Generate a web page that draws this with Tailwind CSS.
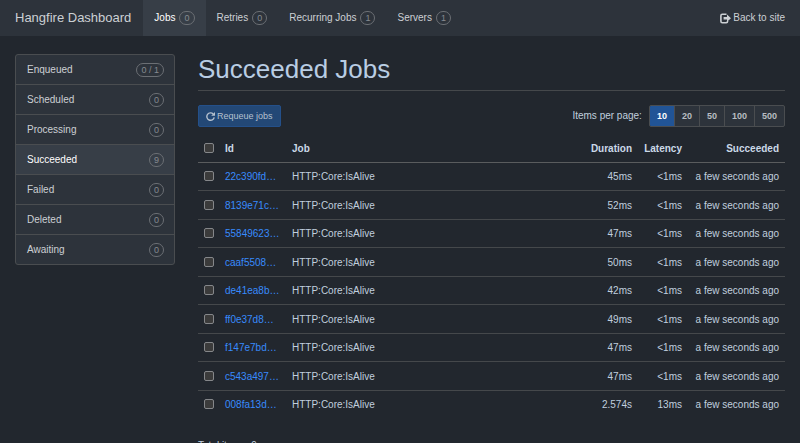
<!DOCTYPE html>
<html lang="en">
<head>
    <meta charset="UTF-8">
    <meta name="viewport" content="width=device-width, initial-scale=1.0">
    <title>Succeeded Jobs – Hangfire Dashboard</title>
    <script src="https://cdn.jsdelivr.net/npm/@tailwindcss/browser@4"></script>
</head>
<body class="min-h-screen bg-[#22272e] font-['Liberation_Sans',Arial,sans-serif] text-[10px] leading-4 text-[#c0cfdf]">
    <!-- Navbar -->
    <nav class="flex h-9 items-stretch bg-[#2d333b] px-[15px] text-[#ccd0d4]">
        <a href="#" class="mr-3 flex items-center text-[13px]">Hangfire Dashboard</a>
        <a href="#" class="flex items-center gap-1 bg-[#373e47] px-[11px] text-white">Jobs
            <span class="rounded-full border border-[#6b6f74] px-1 text-[9px] leading-3 text-[#858a90]">0</span>
        </a>
        <a href="#" class="flex items-center gap-1 px-[11px]">Retries
            <span class="rounded-full border border-[#6b6f74] px-1 text-[9px] leading-3 text-[#858a90]">0</span>
        </a>
        <a href="#" class="flex items-center gap-1 px-[11px]">Recurring Jobs
            <span class="rounded-full border border-[#6b6f74] px-1 text-[9px] leading-3 text-[#858a90]">1</span>
        </a>
        <a href="#" class="flex items-center gap-1 px-[11px]">Servers
            <span class="rounded-full border border-[#6b6f74] px-1 text-[9px] leading-3 text-[#858a90]">1</span>
        </a>
        <a href="#" class="ml-auto flex items-center gap-[2px]">
            <svg class="h-[11px] w-[11px]" viewBox="0 0 11 11" fill="none" stroke="currentColor" stroke-width="1.6">
                <path d="M6.500 1.300H2.300Q0.900 1.300 0.900 2.700V8.300Q0.900 9.700 2.300 9.700H6.200Q7.600 9.700 7.600 8.300V8"/>
                <path d="M7 1.500L11 5.200L7 8.800V6.500H3.600V4H7Z" fill="currentColor" stroke="none"/>
            </svg>
            Back to site
        </a>
    </nav>

    <div class="flex px-[15px] pt-[18px]">
        <!-- Sidebar -->
        <aside class="mr-[23px] w-40 shrink-0 self-start">
            <div id="stats" class="divide-y divide-[#4a4d50] overflow-hidden rounded-[3px] border border-[#4a4d50] bg-[#2d333b] text-[#ccd0d4]"></div>
        </aside>

        <main class="min-w-0 flex-1">
            <h1 class="border-b border-[#45484b] pb-1.5 text-[26px] leading-[30px] text-[#b9cde3]">Succeeded Jobs</h1>

            <div class="mt-3.5 flex items-center">
                <button class="flex h-[22px] items-center gap-[2px] rounded-[2px] border border-[#24508a] bg-[#234876] px-[7px] text-[9px] text-[#b4c0ce]" disabled>
                    <svg class="h-[9px] w-[9px]" viewBox="0 0 9 9" fill="none" stroke="currentColor" stroke-width="1.400">
                        <path d="M7.300 2.100A3.700 3.700 0 1 0 8.200 5.300"/>
                        <path d="M9 0V3.800H5.200Z" fill="currentColor" stroke="none"/>
                    </svg>
                    Requeue jobs
                </button>
                <span class="ml-auto mr-[7px]">Items per page:</span>
                <div class="flex divide-x divide-[#4a4d50] overflow-hidden rounded-[2px] border border-[#4a4d50] bg-[#2d333b] text-[9px] leading-5 font-bold text-[#b8bdc2]">
                    <a href="#" class="bg-[#215496] px-[7px] text-white">10</a>
                    <a href="#" class="px-[7px]">20</a>
                    <a href="#" class="px-[7px]">50</a>
                    <a href="#" class="px-[7px]">100</a>
                    <a href="#" class="px-[7px]">500</a>
                </div>
            </div>

            <table class="mt-[7px] w-full border-collapse [&_td+td]:pt-0.5 [&_th+th]:pt-0.5">
                <thead>
                    <tr class="h-7 border-b border-[#5a5c5e] text-left text-[#cbd9e8]">
                        <th class="w-[27px] pl-[6px]"><input type="checkbox" aria-label="Select all jobs" class="block h-[10px] w-[10px] appearance-none rounded-[2px] border border-[#85878a] bg-[#3b3b3b]"></th>
                        <th class="w-[67px]">Id</th>
                        <th>Job</th>
                        <th class="text-right">Duration</th>
                        <th class="w-[50px] text-right">Latency</th>
                        <th class="w-[103px] pr-[6px] text-right">Succeeded</th>
                    </tr>
                </thead>
                <tbody id="jobs"></tbody>
            </table>

            <p class="mt-5">Total items: 9</p>
        </main>
    </div>

    <script>
        const stats = [
            ['Enqueued', '0 / 1'],
            ['Scheduled', '0'],
            ['Processing', '0'],
            ['Succeeded', '9'],
            ['Failed', '0'],
            ['Deleted', '0'],
            ['Awaiting', '0']
        ];

        const jobs = [
            ['22c390fd…', '45ms', '<1ms'],
            ['8139e71c…', '52ms', '<1ms'],
            ['55849623…', '47ms', '<1ms'],
            ['caaf5508…', '50ms', '<1ms'],
            ['de41ea8b…', '42ms', '<1ms'],
            ['ff0e37d8…', '49ms', '<1ms'],
            ['f147e7bd…', '47ms', '<1ms'],
            ['c543a497…', '47ms', '<1ms'],
            ['008fa13d…', '2.574s', '13ms']
        ];

        document.getElementById('stats').innerHTML = stats.map(([name, count]) => `
            <a href="#" class="flex items-center justify-between py-[6px] pr-[10px] pl-[11px] leading-[17px] ${name === 'Succeeded' ? 'bg-[#373e47] text-white' : ''}">
                ${name}
                <span class="rounded-full border border-[#6b6f74] px-1 text-[9px] leading-3 text-[#858a90]">${count}</span>
            </a>
        `).join('');

        document.getElementById('jobs').innerHTML = jobs.map(([id, duration, latency]) => `
            <tr class="border-b border-[#45484b] odd:h-7 even:h-[29px] last:border-b-0">
                <td class="pl-[6px]"><input type="checkbox" aria-label="Select job ${id}" class="block h-[10px] w-[10px] appearance-none rounded-[2px] border border-[#85878a] bg-[#3b3b3b]"></td>
                <td><a href="#" class="text-[#388bfd]">${id}</a></td>
                <td>HTTP:Core:IsAlive</td>
                <td class="text-right">${duration}</td>
                <td class="text-right">${latency.replace('<', '&lt;')}</td>
                <td class="pr-[6px] text-right">a few seconds ago</td>
            </tr>
        `).join('');
    </script>
</body>
</html>
